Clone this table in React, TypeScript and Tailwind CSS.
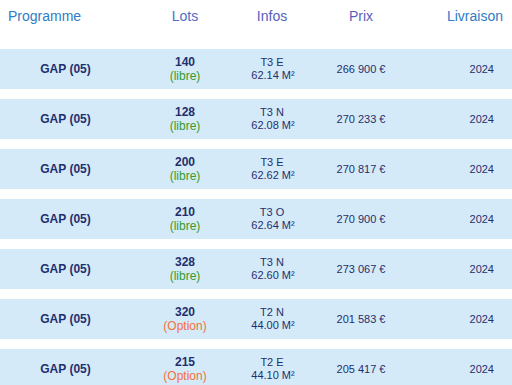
import React from "react";

type Row = { lot: string; status: "libre" | "Option"; type: string; surf: string; prix: string };

const rows: Row[] = [
  { lot: "140", status: "libre", type: "T3 E", surf: "62.14 M²", prix: "266 900 €" },
  { lot: "128", status: "libre", type: "T3 N", surf: "62.08 M²", prix: "270 233 €" },
  { lot: "200", status: "libre", type: "T3 E", surf: "62.62 M²", prix: "270 817 €" },
  { lot: "210", status: "libre", type: "T3 O", surf: "62.64 M²", prix: "270 900 €" },
  { lot: "328", status: "libre", type: "T3 N", surf: "62.60 M²", prix: "273 067 €" },
  { lot: "320", status: "Option", type: "T2 N", surf: "44.00 M²", prix: "201 583 €" },
  { lot: "215", status: "Option", type: "T2 E", surf: "44.10 M²", prix: "205 417 €" },
];

export default function App() {
  return (
    <div
      className="w-[512px] h-[385px] overflow-hidden bg-white"
      style={{ fontFamily: '"Liberation Sans", Arial, sans-serif' }}
    >
      <div className="flex h-[49px] pt-[6px] text-[14px] leading-[20px]">
        <div className="w-[131px] pl-[8px] text-[#2f7cc4]">Programme</div>
        <div className="w-[108px] text-center text-[#4f6cc2]">Lots</div>
        <div className="w-[66px] text-center text-[#5560bc]">Infos</div>
        <div className="w-[112px] text-center text-[#5c5fba]">Prix</div>
        <div className="flex-1 pr-[9px] text-right text-[#2f7cc4]">Livraison</div>
      </div>
      <div className="flex flex-col gap-[10px]">
        {rows.map((r, i) => (
          <div key={i} className="flex h-[40px] shrink-0 items-center bg-[#d5eaf8] text-[#1f2f6e]">
            <div className="w-[131px] text-center text-[12px] font-bold leading-[14px]">GAP (05)</div>
            <div className="w-[108px] text-center text-[12px] leading-[14px]">
              <div className="font-bold">{r.lot}</div>
              <div className={r.status === "libre" ? "text-[#3a9a2e]" : "text-[#f4703c]"}>({r.status})</div>
            </div>
            <div className="w-[66px] text-center text-[11px] leading-[13px]">
              <div>{r.type}</div>
              <div className="pl-[2px]">{r.surf}</div>
            </div>
            <div className="w-[112px] text-center text-[11px] leading-[13px]">{r.prix}</div>
            <div className="flex-1 pr-[18px] text-right text-[11px] leading-[13px]">2024</div>
          </div>
        ))}
      </div>
    </div>
  );
}
